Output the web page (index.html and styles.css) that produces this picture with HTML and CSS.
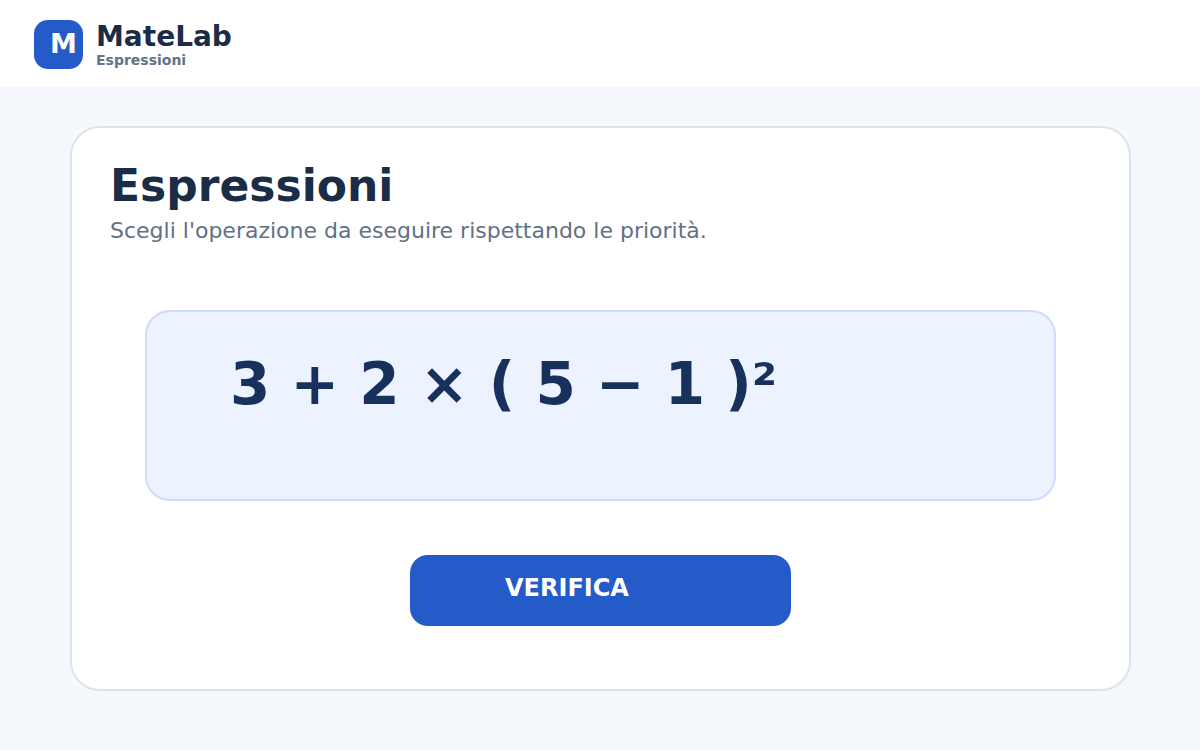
FILE: index.html
```html
<!DOCTYPE html>
<html lang="it">
<head>
<meta charset="utf-8">
<meta name="viewport" content="width=device-width, initial-scale=1">
<title>MateLab – Espressioni</title>
<link rel="stylesheet" href="styles.css">
</head>
<body>
<header class="topbar">
  <div class="logo" aria-hidden="true">M</div>
  <div class="brand">
    <div class="brand-name">MateLab</div>
    <div class="brand-section">Espressioni</div>
  </div>
</header>
<main class="page">
  <section class="card">
    <h1 class="title">Espressioni</h1>
    <p class="subtitle">Scegli l'operazione da eseguire rispettando le priorità.</p>
    <div class="expression">3 + 2 × ( 5 − 1 )²</div>
    <button class="verify" type="button">VERIFICA</button>
  </section>
</main>
</body>
</html>
```
FILE: styles.css
```css
* {
  box-sizing: border-box;
}

body {
  margin: 0;
  min-height: 100vh;
  background: #f5f8fd;
  color: #1a2c46;
  font-family: "DejaVu Sans", sans-serif;
}

.topbar {
  display: flex;
  align-items: center;
  gap: 13px;
  padding: 20px 34px 18px;
  background: #fff;
}

.logo {
  width: 49px;
  height: 49px;
  padding-left: 16px;
  border-radius: 14px;
  background: #245bc8;
  color: #fff;
  font-size: 27px;
  font-weight: 700;
  line-height: 48px;
}

.brand-name {
  font-size: 28px;
  font-weight: 700;
  line-height: 32px;
}

.brand-section {
  color: #62738a;
  font-size: 14px;
  font-weight: 700;
  line-height: 15px;
}

.page {
  padding: 39px 69px 59px 70px;
}

.card {
  display: flex;
  flex-direction: column;
  padding: 32px 38px 63px;
  border: 2px solid #dce4ec;
  border-radius: 30px;
  background: #fff;
}

.title {
  margin: 0;
  font-size: 44px;
  font-weight: 700;
  line-height: 52px;
}

.subtitle {
  margin: 4px 0 0;
  color: #5f7188;
  font-size: 22px;
  line-height: 30px;
}

.expression {
  min-height: 191px;
  margin: 64px 35px 0;
  padding: 37px 83px;
  border: 2px solid #ccdcfa;
  border-radius: 25px;
  background: #ecf3ff;
  color: #18305c;
  font-size: 58px;
  font-weight: 700;
  line-height: 70px;
}

.verify {
  align-self: center;
  width: 381px;
  max-width: 100%;
  margin-top: 54px;
  padding: 17px 95px 22px;
  border: 0;
  border-radius: 18px;
  background: #245bc8;
  color: #fff;
  font: 700 24px/32px "DejaVu Sans", sans-serif;
  text-align: left;
}
```
